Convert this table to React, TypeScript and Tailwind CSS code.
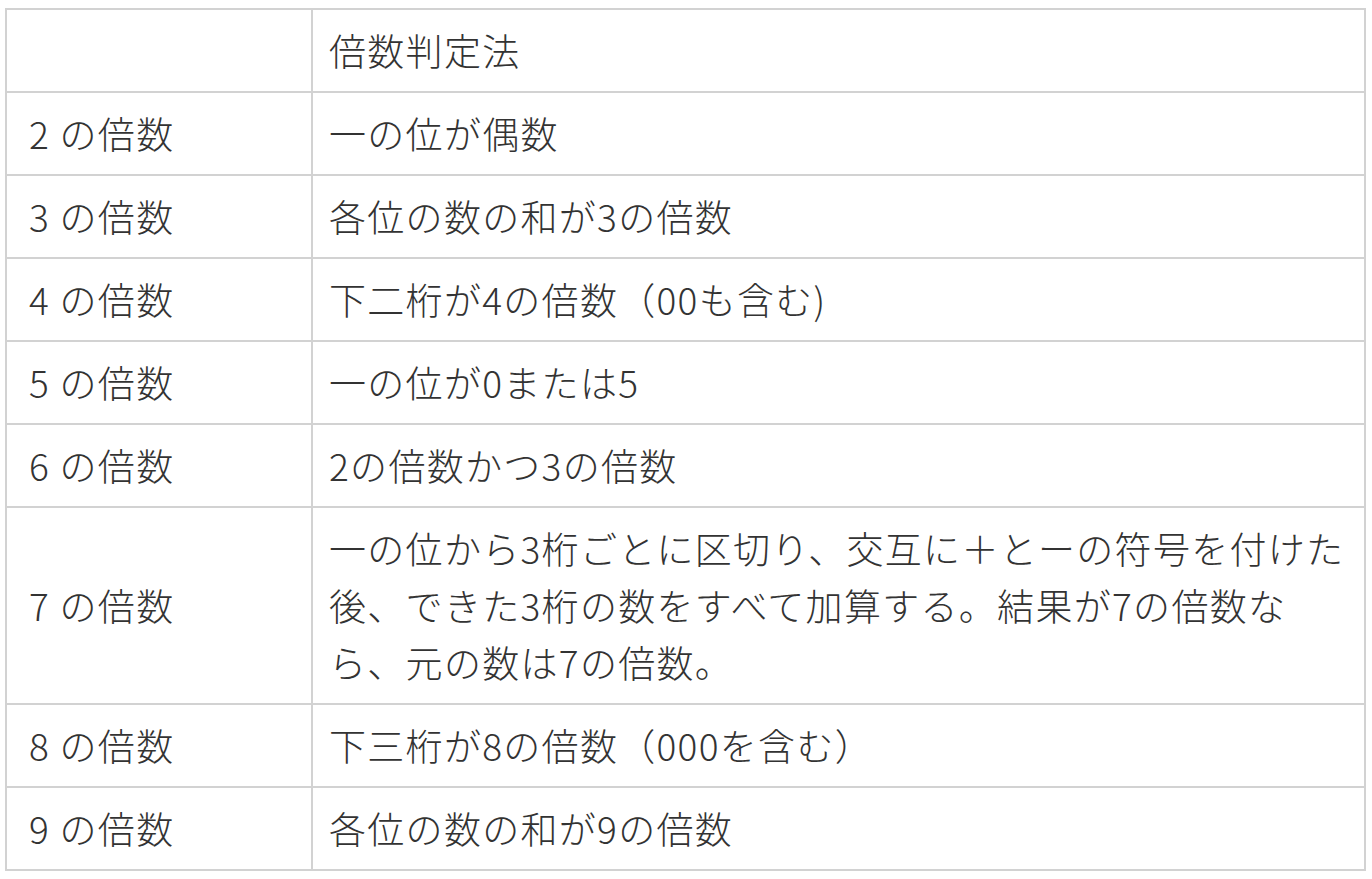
import React from "react";

const rows: [string, React.ReactNode][] = [
  ["2 の倍数", "一の位が偶数"],
  ["3 の倍数", "各位の数の和が3の倍数"],
  ["4 の倍数", "下二桁が4の倍数（00も含む)"],
  ["5 の倍数", "一の位が0または5"],
  ["6 の倍数", "2の倍数かつ3の倍数"],
  [
    "7 の倍数",
    <>
      一の位から3桁ごとに区切り、交互に＋とーの符号を付けた
      <br />
      後、できた3桁の数をすべて加算する。結果が7の倍数な
      <br />
      ら、元の数は7の倍数。
    </>,
  ],
  ["8 の倍数", "下三桁が8の倍数（000を含む）"],
  ["9 の倍数", "各位の数の和が9の倍数"],
];

export default function App() {
  return (
    <div className="min-h-[879px] w-full bg-white pl-[5px] pt-[8px]">
      <table
        className="w-[1361px] border-collapse border-2 border-[#d2d2d2] text-[37px] font-light leading-[57px] tracking-[1.3px] text-[#333333]"
        style={{ fontFamily: '"Noto Sans CJK JP", "Noto Sans", sans-serif' }}
      >
        <tbody>
          <tr>
            <td className="w-[306px] border-2 border-[#d2d2d2] py-3 pl-[22px]"></td>
            <td className="border-2 border-[#d2d2d2] py-3 pl-[16px]">倍数判定法</td>
          </tr>
          {rows.map(([a, b], i) => (
            <tr key={i}>
              <td className="w-[306px] whitespace-nowrap border-2 border-[#d2d2d2] py-3 pl-[22px] align-middle">
                {a}
              </td>
              <td className="whitespace-nowrap border-2 border-[#d2d2d2] py-3 pl-[16px] align-middle">
                {b}
              </td>
            </tr>
          ))}
        </tbody>
      </table>
    </div>
  );
}
